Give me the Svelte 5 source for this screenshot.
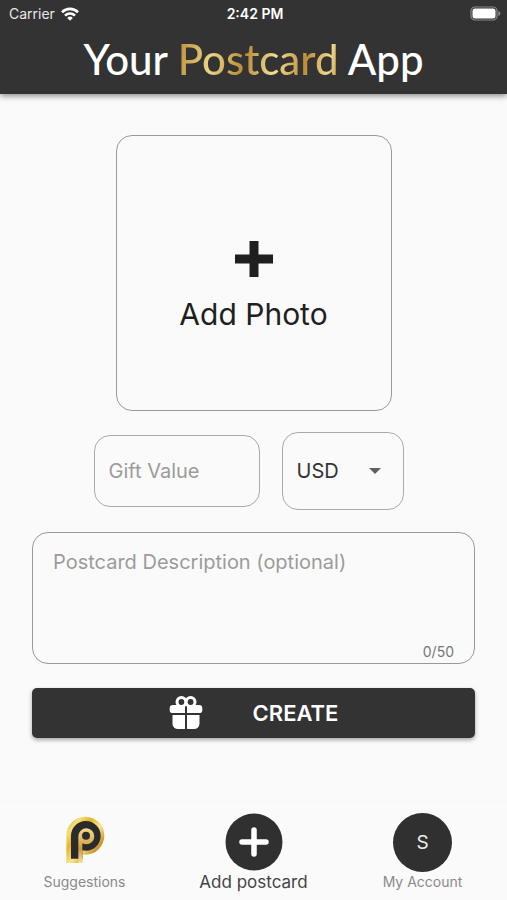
<script lang="ts">
  const MAX_DESCRIPTION = 50
  const currencies = ['USD', 'EUR', 'GBP']

  let giftValue = $state('')
  let currency = $state('USD')
  let description = $state('')
  let activeTab = $state('add')
</script>

<div class="app">
  <header>
    <div class="status">
      <span class="carrier">
        Carrier
        <svg width="18" height="14" viewBox="0 0 18 14" aria-hidden="true">
          <g fill="none" stroke="#fff" stroke-width="2.6">
            <path d="M1 5.2a11.4 11.4 0 0 1 16 0" />
            <path d="M4 8.6a7 7 0 0 1 10 0" />
          </g>
          <path d="M9 13.8 6.2 10.9a4 4 0 0 1 5.6 0z" fill="#fff" />
        </svg>
      </span>
      <span class="time">2:42 PM</span>
      <svg class="battery" width="31" height="15" viewBox="0 0 31 15" aria-hidden="true">
        <rect x="1" y="1" width="26" height="13" rx="4" fill="none" stroke="#8a8a8a" stroke-width="1.2" />
        <rect x="2.5" y="2.5" width="23" height="10" rx="2.5" fill="#fff" />
        <path d="M28.4 5v5c1.2-.5 2-1.4 2-2.5s-.8-2-2-2.5z" fill="#8a8a8a" />
      </svg>
    </div>
    <h1>Your <span class="gold">Postcard</span> App</h1>
  </header>

  <main>
    <button type="button" class="photo">
      <svg width="38" height="38" viewBox="0 0 38 38" aria-hidden="true">
        <path d="M14.5 1h9v13.5H38v9H23.5V37h-9V23.5H0v-9h14.5z" fill="#1f1f1f" />
      </svg>
      Add Photo
    </button>

    <div class="amount">
      <input type="text" inputmode="decimal" placeholder="Gift Value" aria-label="Gift Value" bind:value={giftValue} />
      <div class="currency">
        <select aria-label="Currency" bind:value={currency}>
          {#each currencies as c (c)}
            <option value={c}>{c}</option>
          {/each}
        </select>
        <svg width="12" height="6" viewBox="0 0 12 6" aria-hidden="true">
          <path d="M0 0h12L6 6z" fill="#616161" />
        </svg>
      </div>
    </div>

    <div class="description">
      <textarea
        placeholder="Postcard Description (optional)"
        aria-label="Postcard Description"
        maxlength={MAX_DESCRIPTION}
        bind:value={description}
      ></textarea>
      <span class="counter">{description.length}/{MAX_DESCRIPTION}</span>
    </div>

    <button type="button" class="create">
      <svg width="34" height="34" viewBox="0 0 34 34" aria-hidden="true">
        <g fill="#fff">
          <path d="M4 9h12v8H3.5A2.8 2.8 0 0 1 .7 14.2v-2A3.2 3.2 0 0 1 4 9z" />
          <path d="M18 9h12a3.2 3.2 0 0 1 3.3 3.2v2a2.8 2.8 0 0 1-2.8 2.8H18z" />
          <path d="M3.5 19H16v14H9a5.5 5.5 0 0 1-5.5-5.5z" />
          <path d="M18 19h12.5v8.5A5.5 5.5 0 0 1 25 33h-7z" />
        </g>
        <g fill="#333" stroke="#fff" stroke-width="3">
          <circle cx="12.4" cy="6" r="4.4" />
          <circle cx="21.6" cy="6" r="4.4" />
        </g>
      </svg>
      CREATE
    </button>
  </main>

  <nav>
    <button type="button" class="tab" class:active={activeTab === 'suggestions'} onclick={() => (activeTab = 'suggestions')}>
      <span class="icon">
        <svg width="42" height="52" viewBox="-6 0 126 156" aria-hidden="true">
          <defs>
            <linearGradient id="rim" x1="0" y1="0" x2="1" y2="1">
              <stop offset="0" stop-color="#d9a93a" />
              <stop offset="0.2" stop-color="#f5df7a" />
              <stop offset="0.35" stop-color="#e3b52c" />
              <stop offset="0.55" stop-color="#f7e68c" />
              <stop offset="0.75" stop-color="#c8962c" />
              <stop offset="1" stop-color="#f0d878" />
            </linearGradient>
            <linearGradient id="inlay" x1="0" y1="0" x2="0" y2="1">
              <stop offset="0" stop-color="#f3dc8a" />
              <stop offset="0.6" stop-color="#cc9c3c" />
              <stop offset="1" stop-color="#f5e39a" />
            </linearGradient>
          </defs>
          <path d="M1 58a57 57 0 1 1 57 58q-5 0-9-1v26H1z" fill="url(#rim)" />
          <path d="M15 60a44.5 44.5 0 1 1 45 44q-6 0-11-1v25H15z" fill="#2b2b2b" />
          <path d="M37 60a24 24 0 1 1 24 25q-7 0-12-3v59H37z" fill="url(#inlay)" />
          <circle cx="60" cy="59" r="12" fill="#2b2b2b" />
        </svg>
      </span>
      Suggestions
    </button>
    <button type="button" class="tab" class:active={activeTab === 'add'} onclick={() => (activeTab = 'add')}>
      <span class="icon">
        <svg width="58" height="58" viewBox="0 0 58 58" aria-hidden="true">
          <circle cx="29" cy="29" r="28.5" fill="#303030" />
          <path d="M29 17v24M17 29h24" stroke="#fff" stroke-width="5.5" stroke-linecap="round" />
        </svg>
      </span>
      Add postcard
    </button>
    <button type="button" class="tab" class:active={activeTab === 'account'} onclick={() => (activeTab = 'account')}>
      <span class="icon"><span class="avatar">S</span></span>
      My Account
    </button>
  </nav>
</div>

<style>
  :global(body) {
    background: #fafafa;
  }
  .app {
    min-height: 100vh;
    display: flex;
    flex-direction: column;
    font-family: Inter, 'Liberation Sans', sans-serif;
    color: #1f1f1f;
  }
  button,
  input,
  select,
  textarea {
    box-sizing: border-box;
    margin: 0;
    font-family: inherit;
    color: inherit;
    background: transparent;
  }
  header {
    background: #333;
    color: #fff;
    box-shadow: 0 2px 6px rgba(0, 0, 0, 0.45);
    padding-bottom: 7px;
  }
  .status {
    display: grid;
    grid-template-columns: 1fr auto 1fr;
    align-items: center;
    height: 27px;
    padding: 0 6px 0 9px;
    font-size: 14px;
  }
  .carrier {
    display: flex;
    align-items: center;
    gap: 6px;
    color: #e8e8e8;
  }
  .time {
    font-weight: 600;
  }
  .battery {
    justify-self: end;
  }
  h1 {
    margin: 0;
    padding-top: 4px;
    font-family: Lato, 'Open Sans', sans-serif;
    font-size: 42px;
    line-height: 56px;
    font-weight: 500;
    text-align: center;
    white-space: nowrap;
  }
  .gold {
    background: linear-gradient(100deg, #bd8c35, #e9d585 22%, #b98a35 42%, #f0df94 60%, #bd8d38 78%, #eedb8a 92%, #bf9140);
    background-clip: text;
    color: transparent;
  }
  main {
    flex: 1;
    display: flex;
    flex-direction: column;
    align-items: center;
    padding: 41px 32px 24px;
  }
  .photo {
    width: 276px;
    height: 276px;
    display: flex;
    flex-direction: column;
    align-items: center;
    justify-content: center;
    gap: 18px;
    padding: 26px 0 0;
    border: 1px solid #999;
    border-radius: 16px;
    font-size: 30px;
    line-height: 36px;
    cursor: pointer;
  }
  .amount {
    display: flex;
    align-items: center;
    gap: 22px;
    margin: 21px 0 22px;
    padding-right: 10px;
  }
  .amount input {
    width: 166px;
    height: 72px;
    padding: 0 14px;
    border: 1px solid #aaa;
    border-radius: 16px;
    font-size: 20px;
  }
  ::placeholder {
    color: #9c9c9c;
    opacity: 1;
  }
  .currency {
    display: grid;
    align-items: center;
  }
  .currency > * {
    grid-area: 1 / 1;
  }
  .currency select {
    width: 122px;
    height: 78px;
    padding: 0 14px;
    border: 1px solid #aaa;
    border-radius: 16px;
    appearance: none;
    font-size: 20px;
    color: #333;
  }
  .currency svg {
    justify-self: end;
    margin-right: 23px;
    pointer-events: none;
  }
  .description {
    align-self: stretch;
    display: flex;
    flex-direction: column;
    border: 1px solid #999;
    border-radius: 16px;
    padding: 17px 20px 2px;
  }
  .description textarea {
    height: 93px;
    padding: 0;
    border: 0;
    resize: none;
    font-size: 20px;
    line-height: 24px;
  }
  .counter {
    align-self: flex-end;
    font-size: 14px;
    line-height: 18px;
    color: #777;
  }
  textarea:focus,
  input:focus,
  select:focus {
    outline: none;
  }
  .create {
    align-self: stretch;
    display: flex;
    align-items: center;
    justify-content: center;
    gap: 50px;
    height: 50px;
    margin-top: 24px;
    border: 0;
    border-radius: 5px;
    background: #333;
    color: #fff;
    font-size: 22px;
    font-weight: 600;
    box-shadow: 0 2px 4px rgba(0, 0, 0, 0.35);
    cursor: pointer;
  }
  nav {
    display: grid;
    grid-template-columns: repeat(3, 1fr);
    border-top: 1px solid #f6f6f6;
    padding: 10px 0 8px;
  }
  .tab {
    display: flex;
    flex-direction: column;
    align-items: center;
    padding: 0;
    border: 0;
    color: #8a8a8a;
    font-size: 14px;
    line-height: 20px;
    cursor: pointer;
  }
  .tab.active {
    color: #444;
    font-size: 17px;
  }
  .icon {
    height: 60px;
    display: flex;
    align-items: center;
  }
  .avatar {
    width: 59px;
    height: 59px;
    border-radius: 50%;
    background: #303030;
    color: #eee;
    font-size: 19px;
    line-height: 59px;
  }
</style>
